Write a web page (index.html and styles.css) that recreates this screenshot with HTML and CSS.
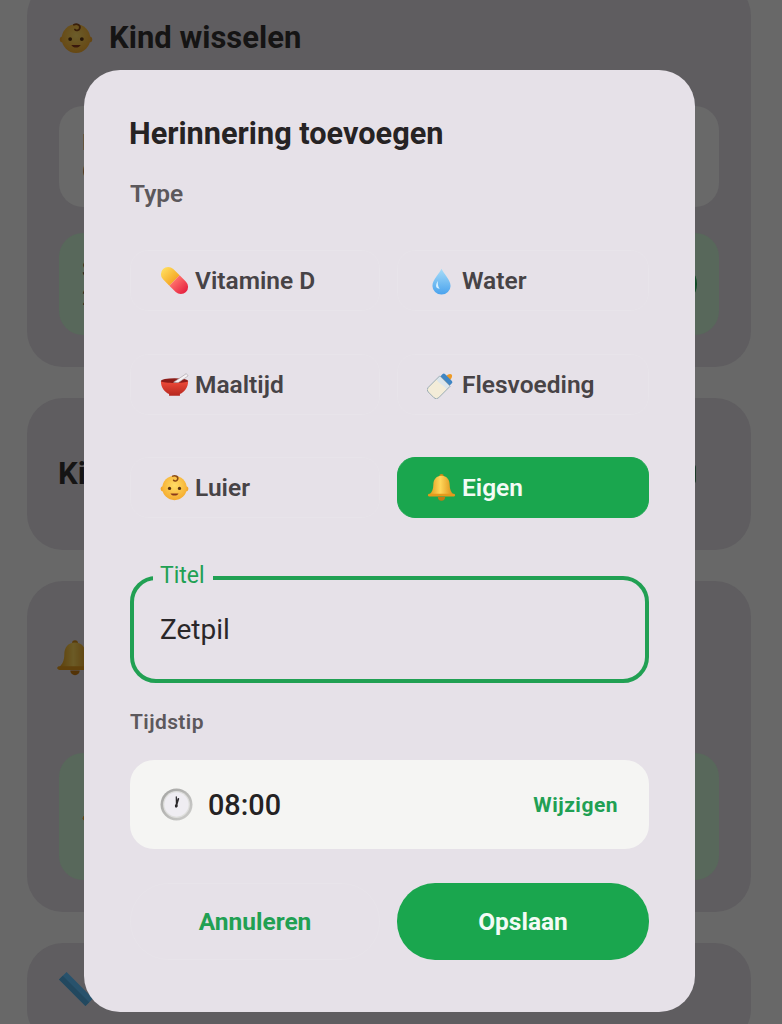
FILE: index.html
```html
<!DOCTYPE html>
<html lang="nl">
<head>
  <meta charset="UTF-8">
  <title>Herinnering toevoegen</title>
  <link rel="stylesheet" href="styles.css">
</head>
<body>
  <svg class="defs" width="0" height="0" aria-hidden="true">
    <defs>
      <linearGradient id="gYellow" x1="0" y1="0" x2="1" y2="0"><stop offset="0" stop-color="#ffdc5c"/><stop offset="1" stop-color="#f5a927"/></linearGradient>
      <linearGradient id="gRed" x1="0" y1="0" x2="1" y2="0"><stop offset="0" stop-color="#ff6f6a"/><stop offset="1" stop-color="#e5203f"/></linearGradient>
      <linearGradient id="gBlue" x1="0" y1="0" x2="0" y2="1"><stop offset="0" stop-color="#a6dcf8"/><stop offset="1" stop-color="#4aa3ee"/></linearGradient>
      <linearGradient id="gBowl" x1="0" y1="0" x2="0" y2="1"><stop offset="0" stop-color="#ee4a38"/><stop offset="1" stop-color="#b5261f"/></linearGradient>
      <linearGradient id="gBell" x1="0" y1="0" x2="1" y2="0"><stop offset="0" stop-color="#e09a1a"/><stop offset=".45" stop-color="#ffd75a"/><stop offset="1" stop-color="#d98a12"/></linearGradient>
      <linearGradient id="gRing" x1="0" y1="0" x2="1" y2="1"><stop offset="0" stop-color="#a3a3a1"/><stop offset="1" stop-color="#cfcfcd"/></linearGradient>
      <radialGradient id="gFace" cx=".5" cy=".4" r=".6"><stop offset="0" stop-color="#ffdd66"/><stop offset="1" stop-color="#f5ab2e"/></radialGradient>
      <symbol id="i-pill" viewBox="0 0 32 32">
        <g transform="rotate(45 16 16)">
          <path d="M16 8H6.100a8 8 0 0 0 0 16H16z" fill="url(#gYellow)"/>
          <path d="M16 8h9.900a8 8 0 0 1 0 16H16z" fill="url(#gRed)"/>
        </g>
      </symbol>
      <symbol id="i-drop" viewBox="0 0 32 32">
        <path d="M16 3c2 5 10 12 10 19a10 9.500 0 0 1-20 0C6 15 14 8 16 3z" fill="url(#gBlue)"/>
        <path d="M10 22c0-2 1-4 2-5.500-.3 3 0 6 2 8.500-2 0-4-1-4-3z" fill="#d8f1ff"/>
      </symbol>
      <symbol id="i-bowl" viewBox="0 0 32 32">
        <ellipse cx="16" cy="12.500" rx="15" ry="3.500" fill="#8c1c18"/>
        <path d="M15 13.500 29 4l2 2.500L20 14z" fill="#f6f2f4" stroke="#a9a2a6" stroke-width=".7"/>
        <path d="M1 12.500c3 2.500 27 2.500 30 0 0 7-4 12-9 14v2H10v-2c-5-2-9-7-9-14z" fill="url(#gBowl)"/>
      </symbol>
      <symbol id="i-bottle" viewBox="0 0 32 32">
        <g transform="rotate(45 16 16) translate(1.600 2.500) scale(.9)">
          <path d="M12.500 3.500c0-3 1.500-6 3.500-6s3.500 3 3.500 6z" fill="#ee9a26"/>
          <rect x="8" y="3" width="16" height="6.500" rx="2" fill="#3f86c4"/>
          <path d="M7 9h18v20a4 4 0 0 1-4 4H11a4 4 0 0 1-4-4z" fill="#dce6ec"/>
          <path d="M7 15c6 2 12-2 18 0v14a4 4 0 0 1-4 4H11a4 4 0 0 1-4-4z" fill="#f3ecd8"/>
          <path d="M7 9h18v20a4 4 0 0 1-4 4H11a4 4 0 0 1-4-4z" fill="none" stroke="#8fa2ab" stroke-width="1"/>
        </g>
      </symbol>
      <symbol id="i-baby" viewBox="0 0 32 32">
        <circle cx="3.500" cy="17.500" r="2.800" fill="#f2a62c"/>
        <circle cx="28.500" cy="17.500" r="2.800" fill="#f2a62c"/>
        <circle cx="16" cy="16.500" r="13.500" fill="url(#gFace)"/>
        <path d="M14 3.500c3-1.500 6.500.5 5.500 3.500-.7 2-3.500 2.500-4.500 1" fill="none" stroke="#8a4a18" stroke-width="1.700" stroke-linecap="round"/>
        <circle cx="10.500" cy="17" r="1.800" fill="#5a3412"/>
        <circle cx="21.500" cy="17" r="1.800" fill="#5a3412"/>
        <path d="M11.500 22.500c2 3.200 7 3.200 9 0z" fill="#8a3a1c"/>
      </symbol>
      <symbol id="i-bell" viewBox="0 0 32 32">
        <circle cx="16" cy="3.500" r="2.500" fill="#d28a14"/>
        <path d="M16 3c6 0 9 4.500 9 10 0 5 1.500 8 4.500 11H2.500C5.500 21 7 18 7 13c0-5.500 3-10 9-10z" fill="url(#gBell)"/>
        <path d="M1 24.500c0-1 1-1.500 2-1.500h26c1 0 2 .5 2 1.500S30 26 29 26H3c-1 0-2-.5-2-1.500z" fill="#e59a1c"/>
        <path d="M12 26.500h8a4 4 0 0 1-8 0z" fill="#c67a10"/>
      </symbol>
      <symbol id="i-clock" viewBox="0 0 32 32">
        <circle cx="16" cy="16" r="15.500" fill="url(#gRing)"/>
        <circle cx="16" cy="16" r="13" fill="#dededc"/>
        <circle cx="16" cy="16" r="11.800" fill="#efedf2"/>
        <path d="M16 17 15.800 8.500" stroke="#2c2a2d" stroke-width="1.200" stroke-linecap="round"/>
        <path d="M15.500 18 17.800 10.500" stroke="#2c2a2d" stroke-width="1.700" stroke-linecap="round"/>
        <circle cx="15.800" cy="17.500" r="1.400" fill="#2c2a2d"/>
      </symbol>
      <symbol id="i-ruler" viewBox="0 0 36 36">
        <path d="M0 8 8 0l28 28-8 8z" fill="#3d7ea6"/>
        <path d="M0 8l4-4 28 28-4 4z" fill="#356f92"/>
      </symbol>
    </defs>
  </svg>

  <div class="page">
    <section class="card card-first">
      <h2 class="card-title"><svg class="emoji dim"><use href="#i-baby"/></svg>Kind wisselen</h2>
      <div class="row row-plain"><span class="row-text">L<br>6</span></div>
      <div class="row row-green"><span class="row-text">S<br>2</span><span class="row-dot"></span></div>
    </section>

    <section class="card card-kind">
      <h2 class="card-title">Kind</h2>
      <span class="kind-edge"></span>
    </section>

    <section class="card card-rem">
      <h2 class="card-title"><svg class="emoji bell dim"><use href="#i-bell"/></svg>Bel</h2>
      <div class="row row-green row-tall"><svg class="mini dim"><use href="#i-baby"/></svg></div>
    </section>

    <section class="card">
      <h2 class="card-title"><svg class="emoji ruler"><use href="#i-ruler"/></svg>Groei</h2>
    </section>
  </div>

  <div class="overlay">
    <div class="modal">
      <h1 class="modal-title">Herinnering toevoegen</h1>
      <div class="type-label">Type</div>

      <div class="chips">
        <button class="chip"><svg class="chip-icon"><use href="#i-pill"/></svg>Vitamine D</button>
        <button class="chip"><svg class="chip-icon"><use href="#i-drop"/></svg>Water</button>
        <button class="chip"><svg class="chip-icon"><use href="#i-bowl"/></svg>Maaltijd</button>
        <button class="chip"><svg class="chip-icon"><use href="#i-bottle"/></svg>Flesvoeding</button>
        <button class="chip"><svg class="chip-icon"><use href="#i-baby"/></svg>Luier</button>
        <button class="chip active"><svg class="chip-icon"><use href="#i-bell"/></svg>Eigen</button>
      </div>

      <div class="field">
        <span class="field-label">Titel</span>
        <span class="field-value">Zetpil</span>
      </div>

      <div class="time-label">Tijdstip</div>
      <div class="time-box">
        <svg class="clock"><use href="#i-clock"/></svg>
        <span class="time-value">08:00</span>
        <span class="time-edit">Wijzigen</span>
      </div>

      <div class="actions">
        <button class="btn btn-cancel">Annuleren</button>
        <button class="btn btn-save">Opslaan</button>
      </div>
    </div>
  </div>
</body>
</html>
```

FILE: styles.css
```css
* {
  box-sizing: border-box;
}
html, body {
  margin: 0;
  padding: 0;
  height: 1024px;
  overflow: hidden;
}
body {
  font-family: Roboto, "Liberation Sans", sans-serif;
  background-color: #686868;
  position: relative;
}
.defs {
  display: block;
  height: 0;
}

/* dimmed page behind the dialog */
.page {
  display: flex;
  flex-direction: column;
  gap: 31px;
  padding: 0 31px 0 27px;
  margin-top: -20px;
}
.card {
  background-color: #5f5d60;
  border-radius: 36px;
  padding: 31px 32px;
}
.card-first {
  height: 387px;
  padding-top: 38px;
}
.card-first .row-plain {
  margin-top: 48px;
}
.card-kind {
  height: 152px;
  display: flex;
  align-items: center;
  justify-content: space-between;
  padding: 0 55px 0 31px;
}
.card-rem {
  height: 331px;
  padding-top: 57px;
}
.card-title {
  display: flex;
  align-items: center;
  gap: 16px;
  margin: 0;
  font-size: 31px;
  line-height: 40px;
  font-weight: 700;
  color: #151414;
}
.emoji {
  width: 34px;
  height: 34px;
}
.dim {
  filter: brightness(0.42);
}
.bell {
  width: 38px;
  height: 38px;
  margin-left: -3px;
}
.ruler {
  margin-top: -10px;
  filter: brightness(0.65);
}
.row {
  display: flex;
  align-items: center;
  justify-content: space-between;
  border-radius: 24px;
  padding: 0 22px 0 23px;
  font-size: 22px;
  line-height: 28px;
  color: #1d1c1d;
}
.row-plain {
  height: 101px;
  background-color: #696969;
}
.row-green {
  height: 102px;
  margin-top: 26px;
  background-color: #58685b;
}
.row-tall {
  height: 127px;
  margin-top: 75px;
}
.row-dot {
  width: 40px;
  height: 40px;
  border-radius: 50%;
  background-color: #0e4a24;
}
.kind-edge {
  width: 30px;
  height: 20px;
  border-radius: 4px;
  background-color: #1c3a27;
}
.mini {
  width: 28px;
  height: 28px;
}

/* dialog */
.overlay {
  position: absolute;
  top: 0;
  left: 0;
  right: 0;
  bottom: 0;
  padding: 70px 0 0 84px;
}
.modal {
  width: 611px;
  height: 942px;
  background-color: #e6e1e8;
  border-radius: 36px;
  padding: 46px 46px 0;
}
.modal-title {
  margin: 0 0 0 -1px;
  font-size: 30.700px;
  line-height: 36px;
  font-weight: 700;
  color: #262324;
}
.type-label {
  margin-top: 26px;
  font-size: 24.500px;
  line-height: 32px;
  font-weight: 600;
  color: #5c585c;
}
.chips {
  display: grid;
  grid-template-columns: 250px 252px;
  column-gap: 17px;
  row-gap: 42.500px;
  margin-top: 40px;
}
.chip {
  display: flex;
  align-items: center;
  gap: 6px;
  height: 61px;
  padding: 0 29px;
  background: none;
  border: 1px solid #e8e4ea;
  border-radius: 18px;
  font-family: inherit;
  font-size: 24.500px;
  font-weight: 600;
  color: #474346;
}
.chip.active {
  background-color: #1aa64e;
  border-color: #1aa64e;
  color: #f3fbf5;
}
.chip-icon {
  width: 29px;
  height: 29px;
  flex: none;
}
.field {
  position: relative;
  height: 107px;
  margin-top: 58px;
  border: 4px solid #21a053;
  border-radius: 26px;
  padding: 0 26px;
  display: flex;
  align-items: center;
}
.field-label {
  position: absolute;
  top: -17px;
  left: 19px;
  padding: 0 8px 0 7px;
  background-color: #e6e1e8;
  font-size: 23px;
  line-height: 26px;
  color: #21a053;
}
.field-value {
  font-size: 28px;
  color: #2a2729;
}
.time-label {
  margin-top: 26px;
  font-size: 21px;
  line-height: 26px;
  font-weight: 600;
  letter-spacing: 0.4px;
  color: #5c585c;
}
.time-box {
  display: flex;
  align-items: center;
  height: 89px;
  margin-top: 25px;
  padding: 0 31px 0 30px;
  background-color: #f5f5f3;
  border-radius: 24px;
}
.clock {
  width: 33px;
  height: 33px;
  flex: none;
}
.time-value {
  margin-left: 15px;
  font-size: 28.800px;
  font-weight: 500;
  color: #242223;
}
.time-edit {
  margin-left: auto;
  font-size: 21px;
  font-weight: 700;
  letter-spacing: 0.5px;
  color: #21a053;
}
.actions {
  display: grid;
  grid-template-columns: 250px 252px;
  column-gap: 17px;
  margin-top: 34px;
}
.btn {
  height: 77px;
  border-radius: 38px;
  font-family: inherit;
  font-size: 24.500px;
  font-weight: 700;
}
.btn-cancel {
  background: none;
  border: 1px solid #e8e4ea;
  color: #21a053;
}
.btn-save {
  background-color: #1aa64e;
  border: none;
  color: #f3fbf5;
}
```
